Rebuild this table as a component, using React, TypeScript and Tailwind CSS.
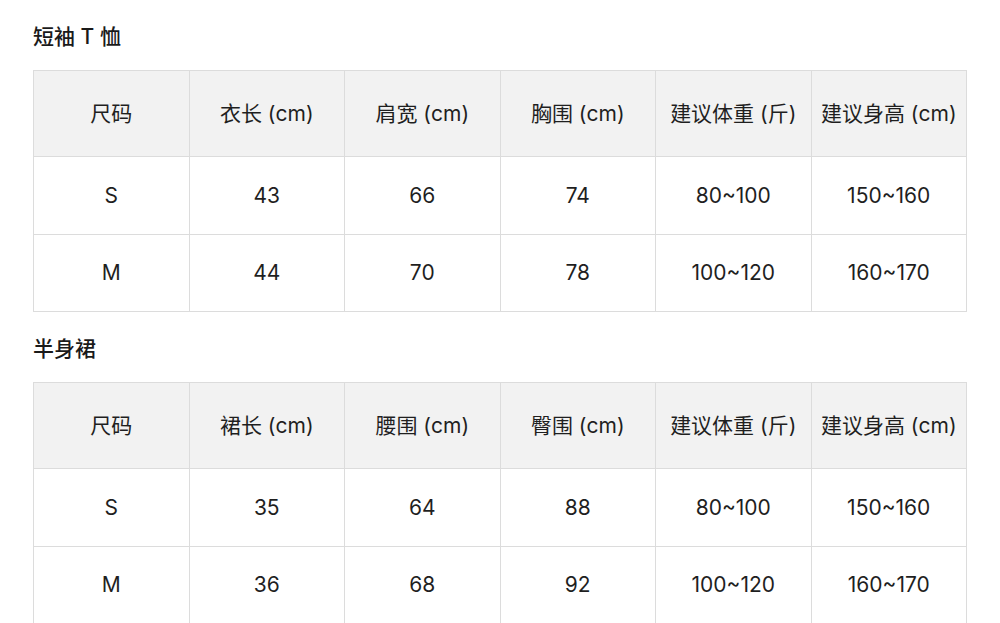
const fontStack = { fontFamily: 'Inter, "Noto Sans CJK SC", sans-serif' };

type Section = { title: string; head: string[]; rows: string[][] };

const sections: Section[] = [
  {
    title: "短袖 T 恤",
    head: ["尺码", "衣长 (cm)", "肩宽 (cm)", "胸围 (cm)", "建议体重 (斤)", "建议身高 (cm)"],
    rows: [
      ["S", "43", "66", "74", "80~100", "150~160"],
      ["M", "44", "70", "78", "100~120", "160~170"],
    ],
  },
  {
    title: "半身裙",
    head: ["尺码", "裙长 (cm)", "腰围 (cm)", "臀围 (cm)", "建议体重 (斤)", "建议身高 (cm)"],
    rows: [
      ["S", "35", "64", "88", "80~100", "150~160"],
      ["M", "36", "68", "92", "100~120", "160~170"],
    ],
  },
];

function SizeTable({ section }: { section: Section }) {
  return (
    <div>
      <div className="h-[70px] flex items-center pt-[3px] text-[21px] font-medium text-[#1a1a1a]">
        {section.title}
      </div>
      <table className="w-[934px] border-collapse table-fixed text-[21px] text-[#1f1f1f]">
        <thead>
          <tr className="h-[86px] bg-[#f2f2f2]">
            {section.head.map((h) => (
              <th key={h} className="border border-[#dcdcdc] font-normal text-center whitespace-nowrap">
                {h}
              </th>
            ))}
          </tr>
        </thead>
        <tbody>
          {section.rows.map((r, i) => (
            <tr key={i} className={i === 0 ? "h-[78px] bg-white" : "h-[77px] bg-white"}>
              {r.map((c, j) => (
                <td key={j} className="border border-[#dcdcdc] text-center">
                  {c}
                </td>
              ))}
            </tr>
          ))}
        </tbody>
      </table>
    </div>
  );
}

export default function App() {
  return (
    <div className="w-[1000px] h-[623px] bg-white pl-[33px] overflow-hidden" style={fontStack}>
      {sections.map((s) => (
        <SizeTable key={s.title} section={s} />
      ))}
    </div>
  );
}
